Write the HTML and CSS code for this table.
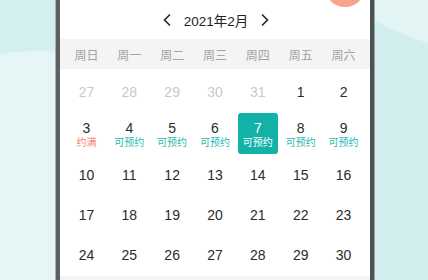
FILE: index.html
```html
<!DOCTYPE html>
<html lang="zh">
<head>
<meta charset="utf-8">
<link rel="stylesheet" href="styles.css">
</head>
<body>
<div class="scene">
  <div class="side side-left"></div>
  <div class="phone">
    <div class="avatar"></div>
    <div class="month-nav">
      <svg class="chev" width="10" height="14" viewBox="0 0 10 14"><path d="M8 1.5 L2.5 7 L8 12.5" fill="none" stroke="#222" stroke-width="1.6"/></svg>
      <span class="month-title">2021年2月</span>
      <svg class="chev" width="10" height="14" viewBox="0 0 10 14"><path d="M2 1.5 L7.5 7 L2 12.5" fill="none" stroke="#222" stroke-width="1.6"/></svg>
    </div>
    <div class="weekdays">
      <span>周日</span><span>周一</span><span>周二</span><span>周三</span><span>周四</span><span>周五</span><span>周六</span>
    </div>
    <div class="days">
      <div class="day muted"><span class="num">27</span></div>
      <div class="day muted"><span class="num">28</span></div>
      <div class="day muted"><span class="num">29</span></div>
      <div class="day muted"><span class="num">30</span></div>
      <div class="day muted"><span class="num">31</span></div>
      <div class="day"><span class="num">1</span></div>
      <div class="day"><span class="num">2</span></div>

      <div class="day tagged"><span class="num">3</span><span class="tag full">约满</span></div>
      <div class="day tagged"><span class="num">4</span><span class="tag">可预约</span></div>
      <div class="day tagged"><span class="num">5</span><span class="tag">可预约</span></div>
      <div class="day tagged"><span class="num">6</span><span class="tag">可预约</span></div>
      <div class="day tagged selected"><span class="num">7</span><span class="tag">可预约</span></div>
      <div class="day tagged"><span class="num">8</span><span class="tag">可预约</span></div>
      <div class="day tagged"><span class="num">9</span><span class="tag">可预约</span></div>

      <div class="day"><span class="num">10</span></div>
      <div class="day"><span class="num">11</span></div>
      <div class="day"><span class="num">12</span></div>
      <div class="day"><span class="num">13</span></div>
      <div class="day"><span class="num">14</span></div>
      <div class="day"><span class="num">15</span></div>
      <div class="day"><span class="num">16</span></div>

      <div class="day"><span class="num">17</span></div>
      <div class="day"><span class="num">18</span></div>
      <div class="day"><span class="num">19</span></div>
      <div class="day"><span class="num">20</span></div>
      <div class="day"><span class="num">21</span></div>
      <div class="day"><span class="num">22</span></div>
      <div class="day"><span class="num">23</span></div>

      <div class="day"><span class="num">24</span></div>
      <div class="day"><span class="num">25</span></div>
      <div class="day"><span class="num">26</span></div>
      <div class="day"><span class="num">27</span></div>
      <div class="day"><span class="num">28</span></div>
      <div class="day"><span class="num">29</span></div>
      <div class="day"><span class="num">30</span></div>
    </div>
    <div class="footer-band"></div>
  </div>
  <div class="side side-right"></div>
</div>
</body>
</html>
```

FILE: styles.css
```css
* { box-sizing: border-box; }
html, body {
  margin: 0;
  padding: 0;
}
body {
  width: 428px;
  height: 280px;
  overflow: hidden;
  font-family: "Liberation Sans", "Noto Sans CJK SC", sans-serif;
  color: #333;
}
.scene {
  display: flex;
  width: 428px;
  height: 280px;
}
.side {
  flex: none;
  height: 280px;
}
.side-left {
  width: 56px;
  background:
    radial-gradient(ellipse 260px 230px at 40px 280px, #e6f6f6 99%, transparent 100%),
    #d4eff0;
}
.side-right {
  flex: 1;
  background:
    radial-gradient(ellipse 230px 120px at 170px -60px, #e4f5f5 99%, transparent 100%),
    #d2eeee;
}
.phone {
  position: relative;
  flex: none;
  width: 318px;
  height: 280px;
  background: #fff;
  border-left: 4px solid #5d6062;
  border-right: 4px solid #4e5153;
  box-shadow: -1px 0 0 #a7b0b2, 1px 0 0 #9aa3a5;
  display: flex;
  flex-direction: column;
}
.avatar {
  position: absolute;
  left: 265px;
  top: -33px;
  width: 40px;
  height: 40px;
  border-radius: 50%;
  background: #f9a28e;
}
.month-nav {
  height: 39px;
  display: flex;
  align-items: center;
  justify-content: center;
  gap: 12px;
  padding-left: 2px;
}
.month-title {
  font-size: 13.5px;
  color: #222;
}
.chev { display: block; }
.weekdays {
  height: 30px;
  background: #f4f4f4;
  display: grid;
  grid-template-columns: repeat(7, 1fr);
  align-items: center;
  padding: 0 5px;
  font-size: 12px;
  color: #a3a3a3;
  text-align: center;
}
.days {
  display: grid;
  grid-template-columns: repeat(7, 1fr);
  grid-template-rows: 40px 43px 40px 40px 40px;
  padding: 3px 5px 0;
}
.day {
  display: flex;
  flex-direction: column;
  align-items: center;
  justify-content: center;
  margin: 1px 1.5px;
  border-radius: 3px;
}
.day.tagged { padding-top: 2px; }
.num {
  font-size: 14px;
  line-height: 16px;
  color: #2b2b2b;
}
.muted .num { color: #c9c9c9; }
.tag {
  font-size: 10px;
  line-height: 13px;
  color: #2bb8b0;
}
.tag.full { color: #f7876f; }
.day.selected {
  background: #12b2a9;
}
.day.selected .num,
.day.selected .tag { color: #fff; }
.footer-band {
  flex: 1;
  background: #f4f4f4;
  margin-top: 1px;
}
```
